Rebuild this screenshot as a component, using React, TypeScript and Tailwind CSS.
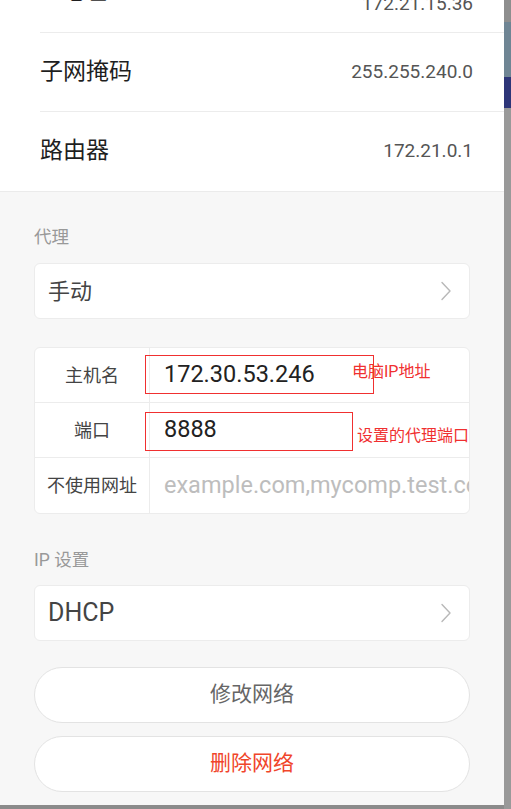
import React from "react";

const font = "font-['Roboto','Noto_Sans_CJK_SC',sans-serif]";

const Chevron: React.FC = () => (
  <svg width="12" height="20" viewBox="0 0 12 20" fill="none" className="shrink-0">
    <path d="M2 1.5 L10 10 L2 18.5" stroke="#b8b8b8" strokeWidth="1.4" strokeLinecap="round" strokeLinejoin="round" />
  </svg>
);

const InfoRow: React.FC<{ label: string; value: string; first?: boolean }> = ({ label, value, first }) => (
  <div className={`flex items-center justify-between h-[79px] pr-[31px] ${first ? "mt-[-47px]" : "border-t border-[#ececec]"}`}>
    <span className="text-[23px] text-[#1f1f1f]">{label}</span>
    <span className={`text-[19px] text-[#555] ${first ? "mt-[24px]" : ""}`}>{value}</span>
  </div>
);

const SelectCard: React.FC<{ text: string; big?: boolean }> = ({ text, big }) => (
  <div className="flex items-center justify-between h-[56px] rounded-[6px] border border-[#ececec] bg-white pl-[13px] pr-[17px]">
    <span className={`${big ? "text-[25px]" : "text-[22px]"} text-[#444]`}>{text}</span>
    <Chevron />
  </div>
);

const ProxyRow: React.FC<{ label: string; children: React.ReactNode; last?: boolean }> = ({ label, children, last }) => (
  <div className={`flex h-[55px] ${last ? "" : "border-b border-[#ececec]"}`}>
    <div className="w-[115px] shrink-0 flex items-center justify-center border-r border-[#ececec] text-[18px] text-[#444]">
      {label}
    </div>
    <div className="flex-1 flex items-center pl-[14px] overflow-hidden whitespace-nowrap">{children}</div>
  </div>
);

const App: React.FC = () => {
  return (
    <div className={`w-[511px] h-[809px] overflow-hidden flex bg-[#8b8b8b] ${font}`}>
      {/* phone panel */}
      <div className="w-[504px] h-[805px] shrink-0 flex flex-col bg-[#f7f7f7] overflow-hidden">
        <div className="bg-white pl-[40px] border-b border-[#ebebeb] h-[192px] shrink-0">
          <InfoRow label="IP地址" value="172.21.15.36" first />
          <InfoRow label="子网掩码" value="255.255.240.0" />
          <InfoRow label="路由器" value="172.21.0.1" />
        </div>

        <div className="px-[34px] flex flex-col">
          <div className="mt-[33px] leading-[24px] text-[17.5px] text-[#999]">代理</div>
          <div className="mt-[14px]">
            <SelectCard text="手动" />
          </div>

          <div className="mt-[28px] rounded-[6px] border border-[#ececec] bg-white relative">
            <ProxyRow label="主机名">
              <span className="text-[23.5px] text-[#222]">172.30.53.246</span>
            </ProxyRow>
            <ProxyRow label="端口">
              <span className="text-[23.5px] text-[#222]">8888</span>
            </ProxyRow>
            <ProxyRow label="不使用网址" last>
              <span className="text-[23.5px] text-[#bdbdbd]">example.com,mycomp.test.com</span>
            </ProxyRow>

            {/* red annotations */}
            <div className="absolute left-[110px] top-[7px] w-[229px] h-[39px] border border-[#f03030]" />
            <div className="absolute left-[317px] top-[12px] text-[16px] text-[#f03030] whitespace-nowrap">电脑IP地址</div>
            <div className="absolute left-[110px] top-[64px] w-[208px] h-[39px] border border-[#f03030]" />
            <div className="absolute left-[322px] top-[76px] text-[16px] text-[#f03030] whitespace-nowrap">设置的代理端口</div>
          </div>

          <div className="mt-[34px] leading-[24px] text-[17.5px] text-[#999]">IP 设置</div>
          <div className="mt-[13px]">
            <SelectCard text="DHCP" big />
          </div>

          <div className="mt-[26px] h-[56px] rounded-full border border-[#e3e3e3] bg-white flex items-center justify-center text-[21px] text-[#666]">
            修改网络
          </div>
          <div className="mt-[13px] h-[56px] rounded-full border border-[#e3e3e3] bg-white flex items-center justify-center text-[21px] text-[#f0452a]">
            删除网络
          </div>
        </div>
      </div>

      {/* desktop behind */}
      <div className="flex-1 flex flex-col">
        <div className="h-[22px] bg-[#8e8e8e]" />
        <div className="h-[55px] bg-[#6f8594]" />
        <div className="h-[31px] bg-[#2d3578]" />
        <div className="flex-1 bg-[#999]" />
      </div>
    </div>
  );
};

export default App;
